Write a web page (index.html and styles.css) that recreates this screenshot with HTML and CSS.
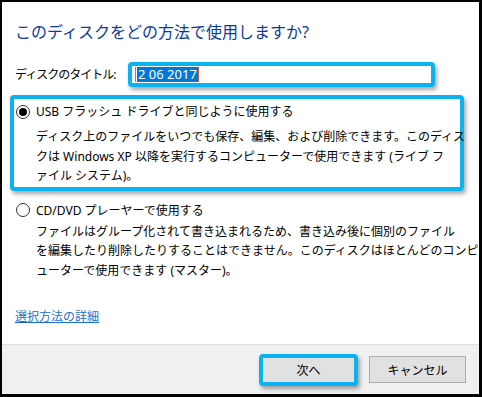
FILE: index.html
```html
<!DOCTYPE html>
<html lang="ja">

<head>
    <meta charset="UTF-8">
    <meta name="viewport" content="width=device-width, initial-scale=1.0">
    <title>ディスクの書き込み</title>
    <link rel="stylesheet" href="styles.css">
</head>

<body>
    <div class="dialog">
        <div class="main">
            <h1 class="instruction">このディスクをどの方法で使用しますか?</h1>

            <div class="title-row">
                <label class="field-label">ディスクのタイトル:</label>
                <div class="field hl">
                    <span class="caret"></span><span class="selected">2 06 2017</span><span class="caret end"></span>
                </div>
            </div>

            <div class="option hl first">
                <div class="option-head">
                    <span class="radio checked"></span>
                    <span>USB フラッシュ ドライブと同じように使用する</span>
                </div>
                <p class="option-desc">ディスク上のファイルをいつでも保存、編集、および削除できます。このディス<br>クは Windows XP 以降を実行するコンピューターで使用できます (ライブ フ<br>ァイル システム)。</p>
            </div>

            <div class="option second">
                <div class="option-head">
                    <span class="radio"></span>
                    <span>CD/DVD プレーヤーで使用する</span>
                </div>
                <p class="option-desc">ファイルはグループ化されて書き込まれるため、書き込み後に個別のファイル<br>を編集したり削除したりすることはできません。このディスクはほとんどのコンピ<br>ューターで使用できます (マスター)。</p>
            </div>

            <a href="#" class="more">選択方法の詳細</a>
        </div>

        <div class="footer">
            <button class="btn next hl">次へ</button>
            <button class="btn">キャンセル</button>
        </div>
    </div>
</body>

</html>
```

FILE: styles.css
```css
* {
    margin: 0;
    padding: 0;
    box-sizing: border-box;
}

body {
    font-family: "Noto Sans", "Noto Sans CJK JP", sans-serif;
    font-size: 12px;
    color: #000;
    background: #fff;
}

.dialog {
    width: 482px;
    height: 397px;
    display: flex;
    flex-direction: column;
    border-style: solid;
    border-color: #000;
    border-width: 2px 3px 3px 2px;
    background: #fff;
}

.main {
    flex: 1;
    padding: 19px 15px 0 8px;
}

.instruction {
    margin-left: 5px;
    font-size: 16px;
    font-weight: normal;
    line-height: 22px;
    color: #0a3a9e;
}

/* タイトル入力 */
.title-row {
    display: flex;
    align-items: center;
    margin: 19px 0 0 5px;
}

.field-label {
    flex: 0 0 113px;
    line-height: 19px;
    letter-spacing: -1px;
}

.hl {
    border: 4px solid #0bb3ee;
    border-radius: 4px;
    box-shadow: 2px 3px 4px rgba(0, 0, 0, 0.35);
}

.field {
    width: 307px;
    height: 25px;
    display: flex;
    align-items: center;
    padding-left: 3px;
    background: #fff;
}

.selected {
    background: #0078d7;
    color: #fff;
    font-size: 13px;
    line-height: 15px;
    padding: 0 1px;
}

.caret {
    width: 1px;
    height: 15px;
    background: #888;
    margin-right: 1px;
}

.caret.end {
    background: #c0602a;
    margin: 0;
}

/* ラジオ */
.option {
    width: 454px;
    padding: 3px 0 1px 2px;
}

.option.first {
    margin-top: 8px;
}

.option.second {
    margin-top: 10px;
    padding: 0 0 0 6px;
}

.option-head {
    display: flex;
    align-items: center;
    gap: 6px;
    line-height: 19px;
}

.radio {
    width: 14px;
    height: 14px;
    border: 1px solid #333;
    border-radius: 50%;
    background: #fff;
    display: flex;
    align-items: center;
    justify-content: center;
}

.radio.checked::after {
    content: "";
    width: 8px;
    height: 8px;
    border-radius: 50%;
    background: #000;
}

.option-desc {
    padding-left: 20px;
    line-height: 19.5px;
    white-space: nowrap;
    margin-top: 6px;
}

.option.second .option-desc {
    margin-top: 2px;
}

.more {
    display: inline-block;
    margin: 27px 0 0 5px;
    line-height: 19px;
    color: #1a6fcf;
}

/* ボタン */
.footer {
    height: 50px;
    display: flex;
    justify-content: flex-end;
    align-items: center;
    gap: 11px;
    padding-right: 13px;
    border-top: 1px solid #dfdfdf;
    background: #f0f0f0;
}

.btn {
    width: 97px;
    height: 27px;
    font-family: inherit;
    font-size: 12px;
    color: #000;
    background: #e1e1e1;
    border: 1px solid #adadad;
}

.btn.next {
    width: 99px;
    height: 32px;
    border: 4px solid #0bb3ee;
    border-radius: 4px;
    margin-top: 1px;
}
```
